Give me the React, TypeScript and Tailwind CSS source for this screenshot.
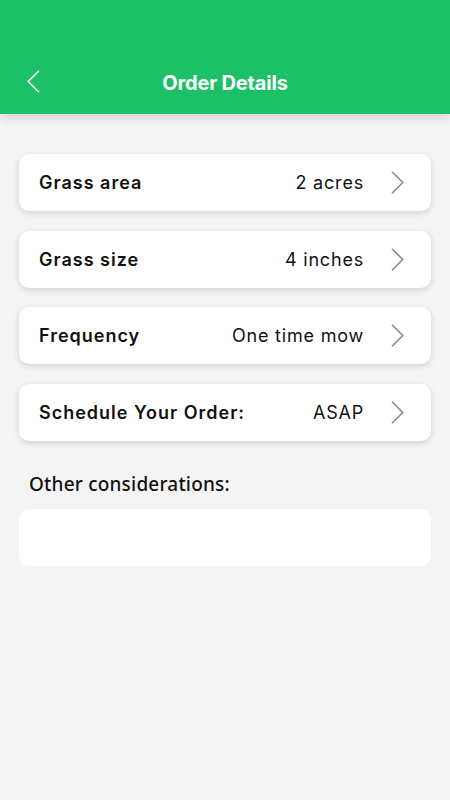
const rows = [
  { label: 'Grass area', value: '2 acres' },
  { label: 'Grass size', value: '4 inches' },
  { label: 'Frequency', value: 'One time mow' },
  { label: 'Schedule Your Order:', value: 'ASAP' },
];

function Chevron({ left, className }: { left?: boolean; className?: string }) {
  return (
    <svg width="13" height="23" viewBox="0 0 13 23" className={className} fill="none">
      <path
        d={left ? 'M12 0.8 L1.2 11.5 L12 22.2' : 'M1 0.8 L11.8 11.5 L1 22.2'}
        stroke="currentColor"
        strokeWidth="1.6"
      />
    </svg>
  );
}

export default function App() {
  return (
    <div className="min-h-[800px] w-[450px] bg-[#f4f4f4] font-['Inter',sans-serif]">
      {/* Header */}
      <div className="relative h-[114px] bg-[#1cc167] shadow-[0_4px_10px_rgba(0,0,0,0.12)]">
        <div className="flex h-full items-end pb-[21px]">
          <Chevron left className="ml-[27px] text-white" />
          <h1 className="absolute left-0 right-0 bottom-[19px] text-center text-[20px] font-bold leading-[24px] tracking-[-0.2px] text-white">
            Order Details
          </h1>
        </div>
      </div>

      {/* Rows */}
      <div className="flex flex-col gap-[19.7px] px-[19px] pt-[40px]">
        {rows.map((r) => (
          <div
            key={r.label}
            className="flex h-[57px] items-center rounded-[10px] bg-white pl-[20px] pr-[27px] shadow-[0_2px_6px_rgba(0,0,0,0.14)]"
          >
            <span className="flex-1 text-[18px] font-semibold tracking-[1px] text-[#111]">{r.label}</span>
            <span className="mr-[-1px] text-[18px] tracking-[0.8px] text-[#111]">{r.value}</span>
            <Chevron className="ml-[28px] text-[#8a8a8a]" />
          </div>
        ))}
      </div>

      {/* Other considerations */}
      <div className="px-[19px] pt-[30px]">
        <p className="pl-[10px] font-['Noto_Sans',sans-serif] text-[19px] font-medium leading-[26px] tracking-[0.2px] text-[#111]">
          Other considerations:
        </p>
        <div className="mt-[12px] h-[57px] rounded-[10px] bg-white" />
      </div>
    </div>
  );
}
